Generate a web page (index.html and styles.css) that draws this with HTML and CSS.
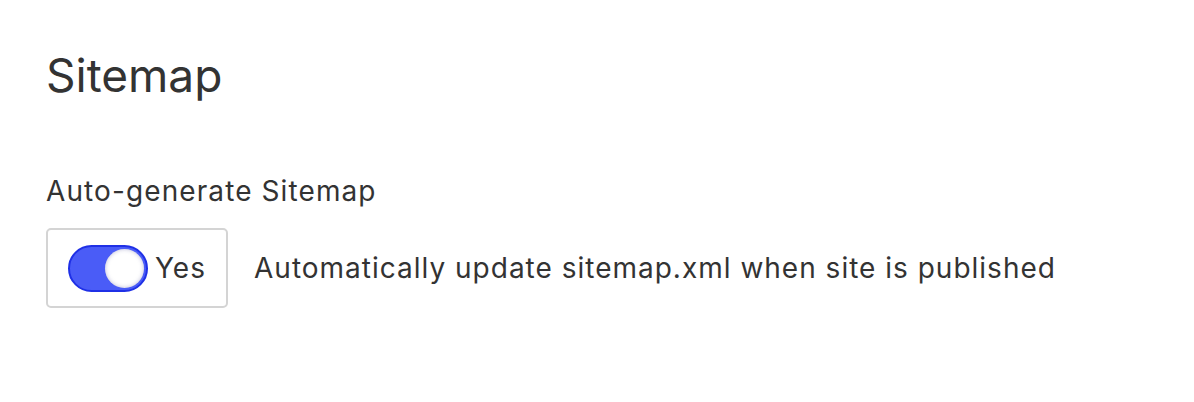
FILE: index.html
```html
<!DOCTYPE html>
<html lang="en">
<head>
<meta charset="utf-8">
<title>Sitemap</title>
<link rel="stylesheet" href="styles.css">
</head>
<body>
<main class="page">
  <h1 class="title">Sitemap</h1>
  <section class="field">
    <div class="label">Auto-generate Sitemap</div>
    <div class="row">
      <label class="switch-box">
        <span class="switch"><span class="knob"></span></span>
        <span class="switch-text">Yes</span>
      </label>
      <span class="desc">Automatically update sitemap.xml when site is published</span>
    </div>
  </section>
</main>
</body>
</html>
```

FILE: styles.css
```css
* { box-sizing: border-box; }
html, body { margin: 0; padding: 0; background: #fff; }
body {
  font-family: Inter, "Noto Sans", sans-serif;
  color: #333;
}
.page {
  padding: 47px 46px 0 46px;
}
.title {
  margin: 0;
  font-size: 46px;
  font-weight: 400;
  line-height: 56px;
  color: #333;
}
.field {
  margin-top: 70px;
}
.label {
  font-size: 28px;
  line-height: 36px;
  letter-spacing: 1.1px;
  color: #333;
}
.row {
  margin-top: 19px;
  display: flex;
  align-items: center;
  gap: 26px;
}
.switch-box {
  width: 182px;
  height: 80px;
  border: 2px solid #d4d4d4;
  border-radius: 5px;
  display: flex;
  align-items: center;
  padding-left: 20px;
  gap: 7px;
}
.switch {
  position: relative;
  width: 80px;
  height: 47px;
  border-radius: 24px;
  background: #4a5cf7;
  border: 2px solid #1f30e6;
  flex: none;
}
.knob {
  position: absolute;
  right: 2px;
  top: 2px;
  width: 39px;
  height: 39px;
  border-radius: 50%;
  background: #fff;
  box-shadow: inset 0 0 4px rgba(60, 60, 140, 0.35);
}
.switch-text {
  font-size: 28px;
  letter-spacing: 1px;
  color: #333;
}
.desc {
  font-size: 28px;
  letter-spacing: 1px;
  color: #333;
}
```
